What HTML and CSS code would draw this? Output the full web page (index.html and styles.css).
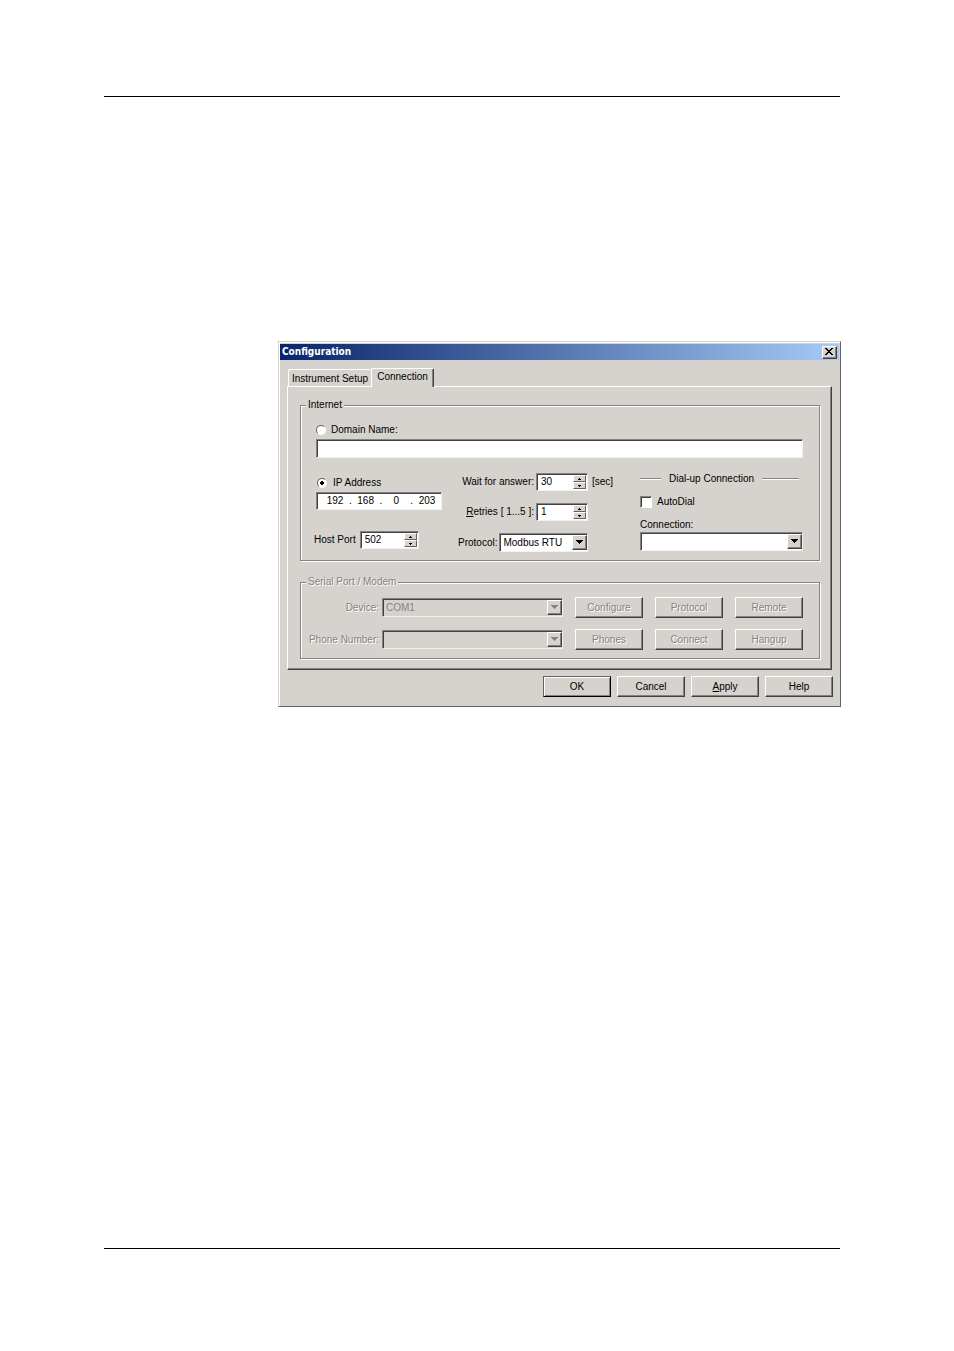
FILE: index.html
```html
<!DOCTYPE html>
<html lang="en">
<head>
<meta charset="utf-8">
<title>Configuration</title>
<link rel="stylesheet" href="styles.css">
</head>
<body>
<header class="rule"></header>
<main class="dialog">
  <div class="titlebar">
    <h1 class="title">Configuration</h1>
    <button class="close raised" type="button" aria-label="Close"><svg width="8" height="7" viewBox="0 0 8 7" shape-rendering="crispEdges"><path d="M0 0h2v1h1v1h2v-1h1v-1h2v1h-1v1h-1v1h-1v1h1v1h1v1h1v1h-2v-1h-1v-1h-2v1h-1v1h-2v-1h1v-1h1v-1h1v-1h-1v-1h-1v-1h-1z"/></svg></button>
  </div>
  <form class="body">
    <div class="tabs">
      <button class="tab" type="button">Instrument Setup</button>
      <button class="tab tab-active" type="button">Connection</button>
    </div>
    <div class="panel">
      <fieldset class="group internet">
        <legend>Internet</legend>
        <label class="choice"><input class="radio" type="radio" name="target">Domain Name:</label>
        <input class="sunken domain" type="text" aria-label="Domain Name">
        <div class="columns">
          <div class="left">
            <label class="choice ip-choice"><input class="radio" type="radio" name="target" checked>IP Address</label>
            <div class="sunken ip">
              <input type="text" value="192" aria-label="IP part 1"><span>.</span><input type="text" value="168" aria-label="IP part 2"><span>.</span><input type="text" value="0" aria-label="IP part 3"><span>.</span><input type="text" value="203" aria-label="IP part 4">
            </div>
            <div class="host">
              <label for="host">Host Port</label>
              <div class="sunken spin spin-wide"><input id="host" type="text" value="502"><span class="steps"><button class="step" type="button" aria-label="Increase"><svg width="3" height="2"><path d="M1 0h1v1h1v1H0V1h1z"/></svg></button><button class="step" type="button" aria-label="Decrease"><svg width="3" height="2"><path d="M0 0h3v1H2v1H1V1H0z"/></svg></button></span></div>
            </div>
          </div>
          <div class="middle">
            <div class="field"><label for="wait">Wait for answer:</label>
              <div class="sunken spin"><input id="wait" type="text" value="30"><span class="steps"><button class="step" type="button" aria-label="Increase"><svg width="3" height="2"><path d="M1 0h1v1h1v1H0V1h1z"/></svg></button><button class="step" type="button" aria-label="Decrease"><svg width="3" height="2"><path d="M0 0h3v1H2v1H1V1H0z"/></svg></button></span></div>
            </div>
            <span class="unit">[sec]</span>
            <div class="field"><label for="retries"><u>R</u>etries [ 1...5 ]:</label>
              <div class="sunken spin"><input id="retries" type="text" value="1"><span class="steps"><button class="step" type="button" aria-label="Increase"><svg width="3" height="2"><path d="M1 0h1v1h1v1H0V1h1z"/></svg></button><button class="step" type="button" aria-label="Decrease"><svg width="3" height="2"><path d="M0 0h3v1H2v1H1V1H0z"/></svg></button></span></div>
            </div>
            <div class="field"><label for="protocol">Protocol:</label>
              <div class="combo protocol"><select class="sunken" id="protocol"><option>Modbus RTU</option></select><span class="arrow raised"><svg width="7" height="4"><path d="M0 0h7v1H6v1H5v1H4v1H3V3H2V2H1V1H0z"/></svg></span></div>
            </div>
          </div>
          <div class="right">
            <div class="divider"><span class="line line-short"></span><span>Dial-up Connection</span><span class="line"></span></div>
            <label class="choice auto"><input class="check" type="checkbox">AutoDial</label>
            <label class="caption" for="connection">Connection:</label>
            <div class="combo"><select class="sunken" id="connection"><option></option></select><span class="arrow raised"><svg width="7" height="4"><path d="M0 0h7v1H6v1H5v1H4v1H3V3H2V2H1V1H0z"/></svg></span></div>
          </div>
        </div>
      </fieldset>
      <fieldset class="group serial" disabled>
        <legend>Serial Port / Modem</legend>
        <label for="device">Device:</label>
        <div class="combo"><select class="sunken" id="device"><option>COM1</option></select><span class="arrow raised"><svg width="7" height="4"><path d="M0 0h7v1H6v1H5v1H4v1H3V3H2V2H1V1H0z"/></svg></span></div>
        <button class="button raised" type="button">Configure</button>
        <button class="button raised" type="button">Protocol</button>
        <button class="button raised" type="button">Remote</button>
        <label for="phone">Phone Number:</label>
        <div class="combo"><select class="sunken" id="phone"><option></option></select><span class="arrow raised"><svg width="7" height="4"><path d="M0 0h7v1H6v1H5v1H4v1H3V3H2V2H1V1H0z"/></svg></span></div>
        <button class="button raised" type="button">Phones</button>
        <button class="button raised" type="button">Connect</button>
        <button class="button raised" type="button">Hangup</button>
      </fieldset>
    </div>
    <div class="actions">
      <button class="button raised default" type="button">OK</button>
      <button class="button raised" type="button">Cancel</button>
      <button class="button raised" type="button"><u>A</u>pply</button>
      <button class="button raised" type="button">Help</button>
    </div>
  </form>
</main>
<footer class="rule rule-bottom"></footer>
</body>
</html>
```
FILE: styles.css
```css
* { box-sizing: border-box; }
body {
  margin: 0;
  min-height: 100vh;
  padding: 96px 113px 102px 104px;
  display: flex;
  flex-direction: column;
  background: #fff;
  color: #000;
  font: 10px/12px "Liberation Sans", Arial, sans-serif;
}
.rule { height: 1px; margin-right: 1px; background: #000; }
.rule-bottom { margin-top: auto; }
input, select, button { font: inherit; color: inherit; border-radius: 0; margin: 0; }
svg { display: block; fill: currentColor; shape-rendering: crispEdges; }
u { text-underline-offset: 1px; }
.dialog {
  margin: 244px 0 0 174px;
  padding: 1px;
  background: #d6d3ce;
  border: 1px solid;
  border-color: #d6d3ce #636363 #636363 #d6d3ce;
  box-shadow: inset 1px 1px #fff;
}
.titlebar {
  display: flex;
  align-items: center;
  justify-content: space-between;
  height: 16px;
  margin-top: 1px;
  padding: 0 2px;
  background: linear-gradient(to right, #08246b, #a5cbf7);
}
.title { margin: 0; color: #fff; font: bold 10px/16px "DejaVu Sans Condensed", "DejaVu Sans", sans-serif; }
.raised {
  background: #d6d3ce;
  border: 1px solid;
  border-color: #fff #424142 #424142 #fff;
  box-shadow: inset -1px -1px #848284;
}
.sunken {
  background: #fff;
  border: 1px solid;
  border-color: #848284 #f4f2ee #f4f2ee #848284;
  box-shadow: inset 1px 1px #424142;
}
.close { display: grid; place-items: center; width: 15px; height: 13px; padding: 0 1px 1px 0; }
.body { padding: 8px 7px; }
.tabs { display: flex; align-items: flex-end; padding-left: 1px; }
.tab {
  width: 83px;
  height: 17px;
  padding: 2px 0 0;
  background: #d6d3ce;
  border: 1px solid #fff;
  border-width: 1px 0 0 1px;
  border-radius: 2px 2px 0 0;
}
.tab-active {
  z-index: 1;
  width: 63px;
  height: 19px;
  margin-bottom: -1px;
  padding: 0 0 2px;
  border-right: 1px solid #424142;
  box-shadow: inset -1px 0 #848284;
}
.panel {
  padding: 12px 11px 10px 12px;
  border: 1px solid;
  border-color: #fff #424142 #424142 #fff;
  box-shadow: inset -1px -1px #848284;
}
.group {
  min-width: 0;
  margin: 0;
  border: 1px solid #848284;
  box-shadow: 1px 1px #fff, inset 1px 1px #fff;
}
legend { margin-left: 5px; padding: 0 2px; background: #d6d3ce; }
.internet { padding: 13px 16px 8px 15px; }
.internet legend { margin-left: -10px; }
.choice { display: flex; align-items: center; gap: 5px; }
.radio {
  appearance: none;
  width: 10px;
  height: 10px;
  border: 1px solid;
  border-color: #636163 #fff #fff #636163;
  border-radius: 50%;
  background: #fff;
}
.radio:checked { background: radial-gradient(circle, #000 0 2px, #fff 2px); }
.domain { display: block; width: 100%; height: 19px; margin-top: 3px; padding: 0 4px; }
.columns { display: grid; grid-template-columns: 126px 1fr 163px; column-gap: 16px; margin-top: 15px; }
.ip-choice { height: 19px; padding-left: 1px; gap: 6px; }
.ip { display: flex; align-items: center; justify-content: space-between; height: 18px; padding: 0 4px 0 8px; }
.ip input { width: 20px; padding: 0; border: 0; background: none; text-align: center; }
.host { display: flex; align-items: center; gap: 4px; height: 18px; margin-top: 21px; margin-left: -2px; }
.spin { display: flex; width: 52px; height: 18px; padding: 1px; }
.spin-wide { width: 59px; }
.spin input { flex: 1; min-width: 0; padding: 0 3px; border: 0; background: none; }
.steps { display: grid; width: 13px; }
.step {
  display: grid;
  place-items: center;
  min-height: 0;
  padding: 0;
  background: #d6d3ce;
  border: 1px solid;
  border-color: #fff #636163 #636163 #fff;
}
.middle { display: grid; grid-template-columns: 130px auto; gap: 12px 4px; align-content: start; }
.field { grid-column: 1; display: flex; align-items: center; justify-content: flex-end; gap: 2px; }
.unit { align-self: center; }
.combo { display: grid; align-items: center; }
.combo select { grid-area: 1 / 1; appearance: none; width: 100%; height: 19px; padding: 0 3px; opacity: 1; }
.arrow {
  grid-area: 1 / 1;
  justify-self: end;
  display: grid;
  place-items: center;
  width: 15px;
  height: 15px;
  margin-right: 1px;
  padding: 0 1px 1px 0;
  pointer-events: none;
}
.protocol { width: 90px; }
.divider { display: flex; align-items: center; gap: 8px; height: 12px; padding-right: 4px; white-space: nowrap; }
.line { flex: 1; height: 2px; background: #848284; border-bottom: 1px solid #fff; }
.line-short { flex: 0 0 21px; }
.auto { height: 13px; margin-top: 10px; }
.check {
  appearance: none;
  width: 12px;
  height: 12px;
  background: #fff;
  border: 1px solid;
  border-color: #848284 #fff #fff #848284;
  box-shadow: inset 1px 1px #424142;
}
.caption { display: block; margin: 11px 0 1px; }
.serial {
  display: grid;
  grid-template-columns: 69px 1fr 68px 68px 68px;
  align-items: center;
  gap: 11px 12px;
  margin-top: 15px;
  padding: 9px 16px 8px 0;
  color: #848284;
  text-shadow: 1px 1px #fff;
}
.serial label { margin-right: -9px; text-align: right; white-space: nowrap; }
.serial .combo select { background: #d6d3ce; text-shadow: none; }
.button { height: 21px; padding: 0; text-shadow: inherit; }
.actions { display: flex; justify-content: flex-end; gap: 6px; margin: 6px -1px 0 0; }
.actions .button { width: 68px; }
.default { border-color: #636163 #000 #000 #636163; box-shadow: inset 1px 1px #fff, inset -1px -1px #848284; }
```
